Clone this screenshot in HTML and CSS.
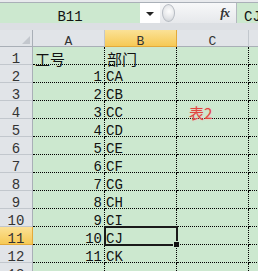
FILE: index.html
```html
<!DOCTYPE html>
<html lang="zh-CN">
<head>
  <meta charset="UTF-8">
  <meta name="viewport" content="width=device-width, initial-scale=1.0">
  <title>Sheet</title>
  <link rel="stylesheet" href="styles.css">
</head>
<body>
  <div class="app">
    <div class="topline"></div>

    <div class="formula-bar">
      <div class="namebox">B11</div>
      <div class="drop"><span class="arrow"></span></div>
      <div class="fbox">
        <span class="knob"></span>
        <span class="fx">fx</span>
      </div>
      <div class="fcontent">CJ</div>
    </div>

    <div class="gap"></div>

    <div class="sheet">
      <div class="corner"><span class="tri"></span></div>
      <div class="colhead">A</div>
      <div class="colhead active">B</div>
      <div class="colhead">C</div>
      <div class="colhead">D</div>

      <div class="rowhead">1</div>
      <div class="cell zh">工号</div>
      <div class="cell zh">部门</div>
      <div class="cell"></div>
      <div class="cell"></div>

      <div class="rowhead">2</div>
      <div class="cell num">1</div>
      <div class="cell">CA</div>
      <div class="cell"></div>
      <div class="cell"></div>

      <div class="rowhead">3</div>
      <div class="cell num">2</div>
      <div class="cell">CB</div>
      <div class="cell"></div>
      <div class="cell"></div>

      <div class="rowhead">4</div>
      <div class="cell num">3</div>
      <div class="cell">CC</div>
      <div class="cell zh note">表2</div>
      <div class="cell"></div>

      <div class="rowhead">5</div>
      <div class="cell num">4</div>
      <div class="cell">CD</div>
      <div class="cell"></div>
      <div class="cell"></div>

      <div class="rowhead">6</div>
      <div class="cell num">5</div>
      <div class="cell">CE</div>
      <div class="cell"></div>
      <div class="cell"></div>

      <div class="rowhead">7</div>
      <div class="cell num">6</div>
      <div class="cell">CF</div>
      <div class="cell"></div>
      <div class="cell"></div>

      <div class="rowhead">8</div>
      <div class="cell num">7</div>
      <div class="cell">CG</div>
      <div class="cell"></div>
      <div class="cell"></div>

      <div class="rowhead">9</div>
      <div class="cell num">8</div>
      <div class="cell">CH</div>
      <div class="cell"></div>
      <div class="cell"></div>

      <div class="rowhead">10</div>
      <div class="cell num">9</div>
      <div class="cell">CI</div>
      <div class="cell"></div>
      <div class="cell"></div>

      <div class="rowhead active">11</div>
      <div class="cell num">10</div>
      <div class="cell selected">CJ</div>
      <div class="cell"></div>
      <div class="cell"></div>

      <div class="rowhead">12</div>
      <div class="cell num">11</div>
      <div class="cell">CK</div>
      <div class="cell"></div>
      <div class="cell"></div>

      <div class="rowhead">13</div>
      <div class="cell"></div>
      <div class="cell"></div>
      <div class="cell"></div>
      <div class="cell"></div>
    </div>
  </div>
</body>
</html>
```

FILE: styles.css
```css
body {
  margin: 0;
  background: #cce8cf;
  font-family: "Liberation Mono", "Noto Sans CJK SC", monospace;
  font-size: 14px;
  color: #111;
}
.app {
  width: 258px;
  height: 271px;
  overflow: hidden;
}

/* formula bar */
.topline {
  height: 2px;
  background: #e8eaed;
  border-bottom: 1px solid #aab0b8;
}
.formula-bar {
  display: flex;
  height: 20px;
}
.namebox {
  width: 140px;
  flex-shrink: 0;
  background: #cce8cf;
  text-align: center;
  line-height: 28px;
}
.drop {
  width: 20px;
  flex-shrink: 0;
  background: #fff;
  display: flex;
  align-items: center;
  justify-content: center;
}
.arrow {
  border-left: 4px solid transparent;
  border-right: 4px solid transparent;
  border-top: 4px solid #222;
  margin-top: 2px;
}
.fbox {
  width: 76px;
  flex-shrink: 0;
  background: linear-gradient(#f7f8f9, #e6e8eb);
  display: flex;
  align-items: center;
  justify-content: space-between;
  padding: 0 7px 0 2px;
  box-sizing: border-box;
}
.knob {
  width: 11px;
  height: 16px;
  border-radius: 50%;
  border: 1px solid #b6bbc2;
  background: radial-gradient(circle at 55% 40%, #fdfdfd 0, #e2e4e7 60%, #c9cdd2 100%);
}
.fx {
  font-family: "Liberation Serif", serif;
  font-style: italic;
  font-weight: bold;
  font-size: 13px;
  color: #333;
  letter-spacing: -1px;
}
.fcontent {
  flex: 1;
  border-left: 1px solid #b3b8bf;
  background: #cce8cf;
  padding-left: 7px;
  line-height: 28px;
  white-space: nowrap;
}
.gap {
  height: 7px;
  background: #dcdfe3;
}

/* sheet */
.sheet {
  display: grid;
  grid-template-columns: 33px repeat(4, 72px);
  grid-template-rows: 17px;
  grid-auto-rows: 18px;
  background: #cce8cf;
}
.corner, .colhead, .rowhead {
  box-sizing: border-box;
  background: #e1e4e8;
  color: #333;
}
.corner {
  border-right: 1px solid #a9afb7;
  border-bottom: 1px solid #a9afb7;
  display: flex;
  align-items: flex-end;
  justify-content: flex-end;
  padding: 0 2px 2px 0;
}
.tri {
  border-left: 8px solid transparent;
  border-bottom: 8px solid #c3c7cd;
}
.colhead {
  border-right: 1px solid #c2c7cd;
  border-bottom: 1px solid #a9afb7;
  text-align: center;
  font-size: 13px;
  line-height: 23px;
}
.rowhead {
  border-right: 1px solid #a9afb7;
  border-bottom: 1px solid #c2c7cd;
  text-align: center;
  line-height: 25px;
}
.colhead.active, .rowhead.active {
  background: linear-gradient(#fbe196, #f6c955);
  border-color: #e3a93a;
}
.cell {
  box-sizing: border-box;
  border-right: 1px dotted #000;
  border-bottom: 1px dotted #000;
  padding-left: 1px;
  line-height: 25px;
  white-space: nowrap;
}
.cell.num {
  text-align: right;
  padding: 0 2px 0 0;
}
.cell.zh {
  font-family: "Noto Sans CJK SC", sans-serif;
  font-size: 15px;
  line-height: 24px;
  padding-left: 2px;
}
.cell.note {
  padding-left: 12px;
  color: #e0463f;
  text-shadow: 0 0 2px #f6b4b0;
}
.cell.selected {
  position: relative;
  outline: 2px solid #1a1a1a;
  outline-offset: -1px;
}
.cell.selected::after {
  content: "";
  position: absolute;
  right: -4px;
  bottom: -4px;
  width: 5px;
  height: 5px;
  background: #111;
  border: 1px solid #cce8cf;
}
```
